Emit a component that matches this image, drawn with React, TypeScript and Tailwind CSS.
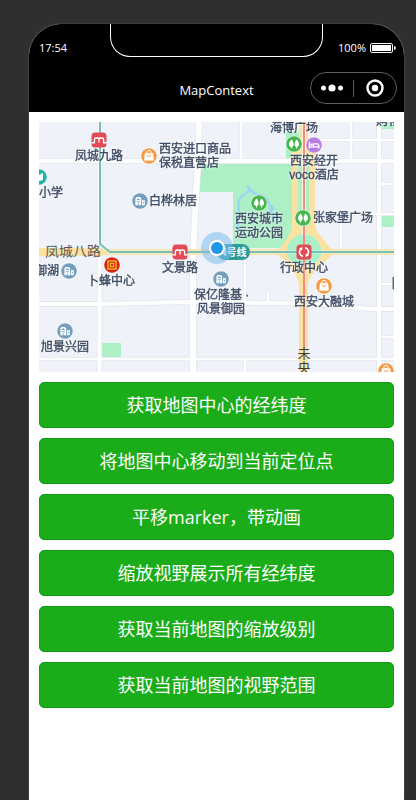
import React from "react";

type Point = { x: number; y: number };
type LabelProps = Point & { text: string; anchor?: "start" | "middle" };

const actions = [
  "获取地图中心的经纬度",
  "将地图中心移动到当前定位点",
  "平移marker，带动画",
  "缩放视野展示所有经纬度",
  "获取当前地图的缩放级别",
  "获取当前地图的视野范围",
];

const labels: LabelProps[] = [
  { x: 60, y: 38, text: "凤城九路" },
  { x: 120, y: 31, text: "西安进口商品", anchor: "start" },
  { x: 120, y: 45, text: "保税直营店", anchor: "start" },
  { x: 110, y: 83, text: "白桦林居", anchor: "start" },
  { x: 0, y: 75, text: "小学", anchor: "start" },
  { x: 255, y: 10, text: "海博广场" },
  { x: 275, y: 43, text: "西安经开" },
  { x: 275, y: 57, text: "voco酒店" },
  { x: 274, y: 100, text: "张家堡广场", anchor: "start" },
  { x: 220, y: 101, text: "西安城市" },
  { x: 220, y: 115, text: "运动公园" },
  { x: -4, y: 153, text: "御湖", anchor: "start" },
  { x: 72, y: 163, text: "卜蜂中心" },
  { x: 141, y: 150, text: "文景路" },
  { x: 155, y: 177, text: "保亿隆基 ·", anchor: "start" },
  { x: 182, y: 191, text: "风景御园" },
  { x: 265, y: 150, text: "行政中心" },
  { x: 285, y: 184, text: "西安大融城" },
  { x: 26, y: 229, text: "旭景兴园" },
  { x: 337, y: 3, text: "购物", anchor: "start" },
  { x: 353, y: 166, text: "陕", anchor: "start" },
];

function Label({ x, y, text, anchor = "middle" }: LabelProps) {
  return (
    <text
      x={x}
      y={y}
      textAnchor={anchor}
      strokeWidth=".35"
      className="fill-[#3d4a63] stroke-[#3d4a63] text-[12px] drop-shadow-[0_0_1px_#ffffff]"
    >
      {text}
    </text>
  );
}

function Disc({ x, y, fill, children }: Point & { fill: string; children: React.ReactNode }) {
  return (
    <g transform={`translate(${x} ${y})`}>
      <circle r="8.4" fill="#fff" opacity=".7" />
      <circle r="7.8" fill={fill} />
      {children}
    </g>
  );
}

function Shop(p: Point) {
  return (
    <Disc {...p} fill="#f79a45">
      <path d="M-3.8 -2.6H3.8L4.4 4.2H-4.4Z" fill="#fff" stroke="#fff" strokeWidth=".8" strokeLinejoin="round" />
      <path d="M-2.2 -3V-3.4A2.2 2.2 0 0 1 2.2 -3.4V-3" fill="none" stroke="#fff" strokeWidth="1" />
      <path d="M-1.8 -1.2A1.8 1.8 0 0 0 1.8 -1.2" fill="none" stroke="#f79a45" strokeWidth=".9" />
    </Disc>
  );
}

function Estate(p: Point) {
  return (
    <Disc {...p} fill="#749fbe">
      <path d="M-4.6 4.2V-2.4L-3.4 -4H0L1.2 -2.4V4.2Z" fill="#fff" />
      <path d="M2 4.2V-.8H4.8V4.2Z" fill="#fff" />
      <path d="M-3.4 -1.4H0M-3.4 .8H0M-1.7 2.4V4.4M-1.7 -3V-1.4M3.4 .8V2.6" stroke="#749fbe" strokeWidth=".9" />
    </Disc>
  );
}

function Park(p: Point) {
  return (
    <Disc {...p} fill="#46b74c">
      <path d="M-2.4 -4.4C-6 -1.4 -5.6 2.8 -2.9 3V4.4H-1.9V3C.2 2.4 .2 -1.8 -2.4 -4.4Z" fill="#fff" />
      <path d="M2.6 -4.4C.4 -2 -.2 2.4 2.1 3V4.4H3.1V3C5.6 2.6 5.8 -1.4 2.6 -4.4Z" fill="#fff" />
    </Disc>
  );
}

function Metro({ x, y }: Point) {
  return (
    <g transform={`translate(${x} ${y})`}>
      <rect x="-7.5" y="-7.5" width="15" height="15" rx="3.5" fill="#e14b55" />
      <path
        d="M-7.5 2.8H-4.6V-.4C-4.6 -1.6 -3.8 -2 -3 -2H-1.4C-.5 -2 0 -1.4 0 -.4V2.6M0 -.4C0 -1.4 .5 -2 1.4 -2H3C3.8 -2 4.6 -1.6 4.6 -.4V2.8H7.5"
        fill="none"
        stroke="#fff"
        strokeWidth="1.4"
      />
    </g>
  );
}

function CityMap() {
  return (
    <svg
      viewBox="0 0 355 250"
      preserveAspectRatio="xMidYMid slice"
      className="block h-[250px] w-full font-['Liberation_Sans','Noto_Sans_CJK_SC',sans-serif]"
    >
      <rect width="355" height="250" fill="#eff2f8" />

      {/* green areas */}
      <g fill="#adf0c6">
        <path d="M163 42H262V126H194V70H160Z" />
        <path d="M247 10H262V40H247Z" />
        <path d="M63 221H82V235H63Z" />
        <path d="M343 93H355V105H343ZM343 1H355V7H343Z" />
      </g>
      <path
        d="M200 90C198 79 201 74 206 72L211 68L208 64M211 68L218 73C226 72 228 77 231 83L235 88M231 86L235 98M199 98V107"
        fill="none"
        stroke="#9dd2f8"
        strokeWidth="2.4"
      />

      {/* side streets: grey casing below white fill */}
      <g fill="none">
        {["#e1e5ea", "#ffffff"].map((colour, i) => (
          <g key={colour} stroke={colour}>
            <path
              d="M202 0V39M312 0V39M276 18H340M340 18H355M340 62H355M276 92H355M302 92V130M206 132V181M206 237V250M229 181V170M340 162H355M340 215H355"
              strokeWidth={i ? 2.6 : 4}
            />
            <path d="M0 237H355" strokeWidth={i ? 2.6 : 4} />
            <path d="M340 0V250" strokeWidth={i ? 4 : 5.4} />
            <path d="M0 39H355" strokeWidth={i ? 4.4 : 5.8} />
            <path d="M0 182H60L150 180L232 181C290 181 320 187 340 187H355" strokeWidth={i ? 4 : 5.4} />
            <path d="M60.5 0V250" strokeWidth={i ? 4 : 5.4} />
            <path d="M160 0L159 39L154 130V250" strokeWidth={i ? 6 : 7.4} />
          </g>
        ))}
      </g>

      {/* avenues */}
      <path d="M0 130H64" stroke="#fbe2a0" strokeWidth="8" />
      <path d="M61 130H355" stroke="#f3e6ba" strokeWidth="6" />
      <path d="M61 130H355" stroke="#fbe4a6" strokeWidth="5" />
      <path d="M258 28H272V108H258Z" fill="#adf0c6" />
      <path d="M258 37H272V42H258Z" fill="#fff6df" />
      <g fill="#fbe2a0">
        <path d="M260 0H269V22L276 30V105L270 109V32H259V109L253 105V30L260 22Z" />
        <path
          fillRule="evenodd"
          d="M253 104H276C277 110 286 119 292 127L300 130L292 134C284 142 271 151 269 162V250H260V162C257 150 248 141 240 134L231 130L240 127C247 119 252 112 253 104ZM265 112C248 113 244 132 252 139C257 145 273 145 279 139C287 130 280 112 265 112Z"
        />
      </g>
      <path d="M265 112C248 113 244 132 252 139C257 145 273 145 279 139C287 130 280 112 265 112Z" fill="#adf0c6" />
      <path d="M265 0V114" stroke="#fff0d8" strokeWidth="4" />

      {/* metro lines */}
      <path d="M61 0V122L71 130H355" fill="none" stroke="#fff" strokeWidth="3" opacity=".5" />
      <path d="M61 0V122L71 130H355" fill="none" stroke="#74c0b9" strokeWidth="2" />
      <path d="M265 0V226" stroke="#f28b88" strokeWidth="2" />

      <text x="6" y="135" className="fill-[#5a5a58] text-[14px]" transform="rotate(-1 6 135)">
        凤城八路
      </text>
      <g className="fill-[#3c3c40] text-[13px]" textAnchor="middle">
        <text x="265" y="236">未</text>
        <text x="265" y="250">央</text>
      </g>

      {labels.map((label) => (
        <Label key={label.text} {...label} />
      ))}

      <Metro x={60} y={18} />
      <Metro x={141} y={130} />
      <g transform="translate(265 130)">
        <rect x="-7.5" y="-7.5" width="15" height="15" rx="3.5" fill="#e14b55" />
        <path d="M-1 4.4A4.4 4.4 0 0 1 -3.4 -2.8M1 -4.4A4.4 4.4 0 0 1 3.4 2.8" fill="none" stroke="#fff" strokeWidth="1.6" />
        <path d="M-5 -3.6L-1.6 -5L-1.8 -1.4ZM5 3.6L1.6 5L1.8 1.4Z" fill="#fff" />
      </g>
      <Shop x={110} y={34} />
      <Shop x={285} y={164} />
      <Shop x={347} y={249} />
      <Estate x={101} y={79} />
      <Estate x={30} y={149} />
      <Estate x={26} y={209} />
      <Estate x={182} y={157} />
      <Park x={220} y={81} />
      <Park x={255} y={22} />
      <Park x={264} y={96} />
      <Disc x={0} y={55} fill="#20b2ab">
        <path d="M-4 -3L0 -2L4 -4V3L0 4L-4 3Z" fill="#fff" />
      </Disc>
      <Disc x={275} y={23} fill="#b77fe2">
        <path d="M-4.6 -3.2V3.4M-4.6 1.8H4.8M4.8 3.4V.4L3.6 -1.2H-.6V1.4" fill="none" stroke="#fff" strokeWidth="1.3" />
        <circle cx="-2.5" cy="-.4" r="1.2" fill="#fff" />
      </Disc>
      <Disc x={73} y={143} fill="#dc2318">
        <rect x="-4" y="-4" width="8" height="8" fill="none" stroke="#fbc820" strokeWidth="1.3" />
        <rect x="-1.6" y="-1.6" width="3.2" height="3.2" fill="none" stroke="#fbc820" strokeWidth="1.1" />
      </Disc>

      {/* line badge and current position */}
      <rect x="178" y="122" width="33" height="16" rx="8" fill="#2c9c9a" />
      <text x="182" y="134" className="fill-white text-[10px] font-bold">
        4号线
      </text>
      <circle cx="178" cy="126" r="16" fill="#7fbdf0" opacity=".55" />
      <circle cx="178" cy="126" r="8" fill="#fff" />
      <circle cx="178" cy="126" r="6" fill="#1f96e8" />
    </svg>
  );
}

export default function App() {
  return (
    <div className="flex min-h-screen bg-[#2f2f2f] pt-6 pr-3 pl-[29px] font-['Open_Sans','Noto_Sans_CJK_SC',sans-serif]">
      <div className="flex flex-1 flex-col overflow-hidden rounded-t-[32px] bg-white shadow-[0_0_2px_#666]">
        <header className="relative h-[88px] bg-black text-white">
          <div className="absolute inset-x-0 top-0 mx-auto h-[33px] w-[213px] rounded-b-[20px] border border-t-0 border-white" />
          <div className="flex h-12 items-center justify-between pr-[7px] pl-[10px]">
            <span className="text-[11px] leading-4 font-medium">17:54</span>
            <div className="flex items-center gap-1">
              <span className="text-[11px] leading-4">100%</span>
              <svg width="27" height="10" viewBox="0 0 27 10">
                <rect x=".5" y=".5" width="22" height="9" rx="1.5" fill="none" stroke="#fff" />
                <rect x="2" y="2" width="19" height="6" fill="#fff" />
                <path d="M24 3C26.4 3.4 26.4 6.6 24 7Z" fill="#fff" />
              </svg>
            </div>
          </div>
          <div className="grid h-8 grid-cols-[1fr_auto_1fr] items-center px-[7px]">
            <h1 className="col-start-2 pt-1 text-[13px] leading-4">MapContext</h1>
            <div className="flex h-8 w-[87px] items-center justify-self-end rounded-full border border-[#5c5c5c]">
              <button type="button" aria-label="更多" className="flex flex-1 justify-center">
                <svg width="22" height="8" viewBox="0 0 22 8" fill="#fff">
                  <circle cx="2.5" cy="4" r="2.5" />
                  <circle cx="11" cy="4" r="3.6" />
                  <circle cx="19.5" cy="4" r="2.5" />
                </svg>
              </button>
              <span className="h-[17px] w-px bg-[#5c5c5c]" />
              <button type="button" aria-label="关闭" className="flex flex-1 justify-center">
                <svg width="18" height="18" viewBox="0 0 18 18">
                  <circle cx="9" cy="9" r="7.5" fill="none" stroke="#fff" strokeWidth="2.4" />
                  <circle cx="9" cy="9" r="3.2" fill="#fff" />
                </svg>
              </button>
            </div>
          </div>
        </header>

        <main className="flex flex-col gap-[10px] p-[10px]">
          <CityMap />
          {actions.map((action) => (
            <button
              key={action}
              type="button"
              className="h-[46px] w-full rounded-[5px] border border-[#18991a] bg-[#1aad19] text-center text-[18px] text-white"
            >
              {action}
            </button>
          ))}
        </main>
      </div>
    </div>
  );
}
